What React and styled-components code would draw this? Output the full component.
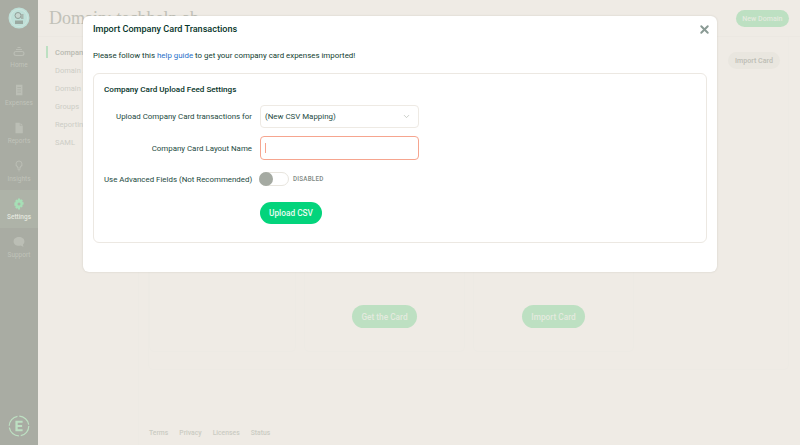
import React from "react";
import styled, { createGlobalStyle } from "styled-components";
import { ChevronDown, X } from "lucide-react";

const Global = createGlobalStyle`
  html, body { margin: 0; padding: 0; height: 100%; background: #efebe5; }
  * { box-sizing: border-box; }
  body { font-family: Roboto, "Liberation Sans", sans-serif; overflow: hidden; }
`;

const Page = styled.div`
  position: relative;
  width: 800px;
  height: 445px;
  display: flex;
  overflow: hidden;
  background: #efebe5;
`;

const Sidebar = styled.nav`
  width: 38px;
  flex: none;
  background: #a9aca3;
  display: flex;
  flex-direction: column;
  padding-top: 7px;
`;

const LogoSlot = styled.div`
  height: 31px;
  display: flex;
  justify-content: center;
  align-items: flex-start;
`;

const NavItem = styled.div`
  height: 38px;
  display: flex;
  flex-direction: column;
  align-items: center;
  justify-content: center;
  gap: 3px;
  padding-top: 1px;
  font-size: 6.5px;
  font-weight: ${p => (p.$active ? 500 : 400)};
  color: ${p => (p.$active ? "#e3e6de" : "#c0c3ba")};
  background: ${p => (p.$active ? "#aeb3a8" : "transparent")};
`;

const SidebarFoot = styled.div`
  margin-top: auto;
  height: 30px;
  display: flex;
  justify-content: center;
`;

const Main = styled.div`
  flex: 1;
  display: flex;
  flex-direction: column;
  min-width: 0;
`;

const Header = styled.header`
  height: 37px;
  flex: none;
  display: flex;
  align-items: center;
  justify-content: space-between;
  padding: 0 11px;
  border-bottom: 1px solid #ece8e2;
`;

const Title = styled.h1`
  margin: 0;
  font: 400 18px "Liberation Serif", serif;
  color: #c1c1b8;
`;

const GreenPill = styled.div`
  height: ${p => (p.$large ? "23px" : "17px")};
  padding: 0 ${p => (p.$large ? "9.5px" : "6.5px")};
  border-radius: 12px;
  background: #bde0c2;
  color: #e4eadf;
  font-size: ${p => (p.$large ? "8.3px" : "7.1px")};
  font-weight: 500;
  display: flex;
  align-items: center;
  white-space: nowrap;
`;

const Body = styled.div`
  flex: 1;
  display: flex;
  min-height: 0;
`;

const SubNav = styled.div`
  width: 101px;
  flex: none;
  border-right: 1px solid #edeae4;
  padding: 6px 0 0 8px;
  display: flex;
  flex-direction: column;
`;

const SubItem = styled.div`
  height: 18px;
  display: flex;
  align-items: center;
  padding-left: 9px;
  font-size: 7.5px;
  font-weight: ${p => (p.$active ? 500 : 400)};
  color: ${p => (p.$active ? "#b9bab1" : "#cdcdc5")};
  white-space: nowrap;
`;

const ActiveBar = styled.span`
  width: 2px;
  height: 12px;
  margin: 0 7px 0 -9px;
  background: #bde0c2;
`;

const Content = styled.div`
  flex: 1;
  min-width: 0;
  padding: 0 11px 0 10px;
  display: flex;
  flex-direction: column;
`;

const Panel = styled.section`
  height: 333px;
  flex: none;
  border: 1px solid #edeae4;
  border-top: none;
  border-radius: 0 0 5px 5px;
  padding: 15px 0 17px 0;
  display: flex;
  flex-direction: column;
  justify-content: space-between;
  margin-left: -1px;
`;

const PanelTop = styled.div`
  display: flex;
  justify-content: flex-end;
  padding-right: 8px;
`;

const GreyPill = styled.div`
  height: 17px;
  padding: 0 7px;
  border-radius: 9px;
  background: #e9e6df;
  color: #bdbdb5;
  font-size: 7.1px;
  font-weight: 500;
  display: flex;
  align-items: center;
`;

const Cards = styled.div`
  display: flex;
  gap: 8px;
`;

const Card = styled.div`
  width: ${p => p.$w}px;
  height: 120px;
  border: 1px solid #edeae4;
  border-top: none;
  border-radius: 0 0 5px 5px;
  display: flex;
  align-items: flex-end;
  justify-content: center;
  padding-bottom: 23px;
`;

const Footer = styled.footer`
  display: flex;
  gap: 11px;
  margin-top: auto;
  padding-bottom: 8px;
  font-size: 6.8px;
  font-weight: 500;
  color: #cbcbc3;
`;

const Modal = styled.div`
  position: absolute;
  left: 83px;
  top: 16px;
  width: 634px;
  height: 256px;
  background: #fff;
  border-radius: 6px;
  box-shadow: 0 0 2px rgba(120, 115, 100, 0.25);
  padding: 8px 10px 0;
  display: flex;
  flex-direction: column;
  color: #0b3a2e;
`;

const ModalHead = styled.div`
  display: flex;
  align-items: center;
  justify-content: space-between;
  height: 10px;
`;

const ModalTitle = styled.h2`
  margin: 0;
  font-size: 9.1px;
  font-weight: 500;
  color: #06352a;
`;

const Close = styled.div`
  color: #8a9a94;
  display: flex;
  margin-top: 1px;
  margin-right: -4px;
`;

const Intro = styled.p`
  margin: 16px 0 0;
  font-size: 7.9px;
  line-height: 11px;
  color: #10402f;
`;

const HelpLink = styled.a`
  color: #1f6fc9;
`;

const SettingsBox = styled.div`
  margin-top: 12px;
  height: 170px;
  border: 1px solid #ece8e2;
  border-radius: 6px;
  padding: 10px 10px 0;
`;

const SectionTitle = styled.h3`
  margin: 0;
  height: 11px;
  line-height: 11px;
  font-size: 8.1px;
  font-weight: 500;
  color: #06352a;
`;

const Form = styled.div`
  margin-top: 10px;
  display: grid;
  grid-template-columns: 148px 159px;
  column-gap: 8px;
  align-items: center;
`;

const Label = styled.div`
  text-align: right;
  font-size: 7.9px;
  color: #1c4a3e;
  white-space: nowrap;
`;

const Select = styled.div`
  height: 23px;
  border: 1px solid #eeeae4;
  border-radius: 4px;
  padding: 0 7px 0 4px;
  display: flex;
  align-items: center;
  justify-content: space-between;
  font-size: 7.9px;
  color: #1c4a3e;
`;

const ChevronWrap = styled.span`
  display: flex;
  color: #b9bdb6;
`;

const NameInput = styled.div`
  margin-top: 8px;
  height: 24px;
  border: 1px solid #f6a58f;
  border-radius: 4px;
  display: flex;
  align-items: center;
  padding-left: 4px;
`;

const Caret = styled.span`
  width: 1px;
  height: 10px;
  background: #f6a58f;
`;

const RowLabel = styled(Label)`
  margin-top: ${p => p.$mt}px;
`;

const ToggleRow = styled.div`
  margin-top: 12px;
  display: flex;
  align-items: center;
  gap: 4px;
  margin-left: -1px;
`;

const Toggle = styled.div`
  position: relative;
  width: 30px;
  height: 14px;
  border: 1px solid #e8e5de;
  border-radius: 7px;
`;

const Knob = styled.span`
  position: absolute;
  left: -1px;
  top: -1px;
  width: 14px;
  height: 14px;
  border-radius: 50%;
  background: #a5aaa2;
`;

const ToggleText = styled.span`
  font-size: 6.3px;
  font-weight: 500;
  letter-spacing: 0.2px;
  color: #7f8a84;
`;

const Upload = styled.button`
  grid-column: 2;
  justify-self: start;
  margin-top: 16px;
  width: 62px;
  height: 22px;
  padding: 0;
  border: 0;
  border-radius: 11px;
  background: #03d47c;
  color: #eafbf2;
  font-family: inherit;
  font-size: 8.3px;
  font-weight: 500;
`;

const Ico = ({ children, color = "#bbbeb5" }) => (
  <svg width="12" height="12" viewBox="0 0 12 12" fill={color} style={{ display: "block" }}>
    {children}
  </svg>
);

const navs = [
  ["Home", (
    <Ico>
      <path d="M4.500 1h3v1h-3zM3 3h6v1H3z" />
      <path d="M3 5h6a2.500 2.500 0 0 1 0 5H3a2.500 2.500 0 0 1 0-5zm0 1.100a1.400 1.400 0 0 0 0 2.800h6a1.400 1.400 0 0 0 0-2.800z" fillRule="evenodd" />
    </Ico>
  )],
  ["Expenses", (
    <Ico>
      <path fillRule="evenodd" d="M3 .8h6.400v10.400H3zM4.400 3v.8h3.600V3zM4.400 5.400v.8h3.600v-.8zM4.400 7.800v.8h3.600v-.8z" />
    </Ico>
  )],
  ["Reports", (
    <Ico>
      <path d="M2.500 .8h4.300v3h3v7.400H2.500zM7.500 .9l2.300 2.300H7.500z" />
    </Ico>
  )],
  ["Insights", (
    <Ico>
      <path fillRule="evenodd" d="M6 .6a3.500 3.500 0 0 1 1.800 6.500V8.600H4.200V7.100A3.500 3.500 0 0 1 6 .6zm0 1a2.500 2.500 0 0 0-1 4.800v1.200h2V6.400a2.500 2.500 0 0 0-1-4.800z" />
      <path d="M4.600 9.200h2.800v.8H4.600zM5.200 10.500h1.600v.7H5.200z" />
    </Ico>
  )],
  ["Settings", (
    <Ico color="#a6dfb6">
      <path fillRule="evenodd" d="M5 .6h2l.3 1.500 1.200-.8 1.400 1.400-.8 1.200 1.500.3v2.400l-1.500.3.8 1.200-1.400 1.400-1.200-.8L7 11.400H5l-.3-1.500-1.200.8-1.400-1.400.8-1.200-1.500-.3V4.400l1.500-.3-.8-1.200 1.400-1.400 1.200.8zM6 4.500a1.500 1.500 0 1 0 0 3 1.500 1.500 0 0 0 0-3z" />
    </Ico>
  )],
  ["Support", (
    <Ico>
      <path d="M6 1c3 0 5.400 1.800 5.400 4.400 0 1.300-.6 2.400-1.500 3.200l.6 2.400-2.800-1.400c-.5.1-1.100.2-1.700.2-3 0-5.400-1.800-5.400-4.400S3 1 6 1z" />
    </Ico>
  )],
];

const subs = ["Company Cards", "Domain Admins", "Domain Members", "Groups", "Reporting", "SAML"];

export default function App() {
  return (
    <Page>
      <Global />
      <Sidebar>
        <LogoSlot>
          <svg width="22" height="22" viewBox="0 0 22 22">
            <circle cx="11" cy="11" r="10.500" fill="#bfe0d8" />
            <circle cx="11" cy="11" r="8.500" fill="none" stroke="#cfe6df" strokeWidth="1" />
            <circle cx="10" cy="8.500" r="3" fill="#c6d6cf" stroke="#8f9f98" strokeWidth="1" />
            <path d="M7 13.500h8v3.500H7z" fill="#9aa9a1" />
            <path d="M13 7h2.500v5H13z" fill="#a7b6ae" />
          </svg>
        </LogoSlot>
        {navs.map(([name, icon]) => (
          <NavItem key={name} $active={name === "Settings"}>
            {icon}
            <span>{name}</span>
          </NavItem>
        ))}
        <SidebarFoot>
          <svg width="22" height="22" viewBox="0 0 22 22">
            <circle cx="11" cy="11" r="9.800" fill="none" stroke="#bde0c2" strokeWidth="1.200" strokeDasharray="13.500 1.900" />
            <path d="M7.400 5.800h7.200v2H9.700v2.200h4.400v2H9.700v2.200h4.900v2H7.400z" fill="#bde0c2" />
          </svg>
        </SidebarFoot>
      </Sidebar>
      <Main>
        <Header>
          <Title>Domain: techhelp.ab</Title>
          <GreenPill>New Domain</GreenPill>
        </Header>
        <Body>
          <SubNav>
            {subs.map((s, i) => (
              <SubItem key={s} $active={i === 0}>
                {i === 0 && <ActiveBar />}
                {s}
              </SubItem>
            ))}
          </SubNav>
          <Content>
            <Panel>
              <PanelTop>
                <GreyPill>Import Card</GreyPill>
              </PanelTop>
              <Cards>
                <Card $w={147} />
                <Card $w={161}><GreenPill $large>Get the Card</GreenPill></Card>
                <Card $w={161}><GreenPill $large>Import Card</GreenPill></Card>
              </Cards>
            </Panel>
            <Footer>
              <span>Terms</span>
              <span>Privacy</span>
              <span>Licenses</span>
              <span>Status</span>
            </Footer>
          </Content>
        </Body>
      </Main>
      <Modal>
        <ModalHead>
          <ModalTitle>Import Company Card Transactions</ModalTitle>
          <Close><X size={13} strokeWidth={3.600} /></Close>
        </ModalHead>
        <Intro>
          Please follow this <HelpLink>help guide</HelpLink> to get your company card expenses imported!
        </Intro>
        <SettingsBox>
          <SectionTitle>Company Card Upload Feed Settings</SectionTitle>
          <Form>
            <Label>Upload Company Card transactions for</Label>
            <Select>
              (New CSV Mapping)
              <ChevronWrap><ChevronDown size={9} /></ChevronWrap>
            </Select>
            <RowLabel $mt={8}>Company Card Layout Name</RowLabel>
            <NameInput><Caret /></NameInput>
            <RowLabel $mt={12}>Use Advanced Fields (Not Recommended)</RowLabel>
            <ToggleRow>
              <Toggle><Knob /></Toggle>
              <ToggleText>DISABLED</ToggleText>
            </ToggleRow>
            <Upload>Upload CSV</Upload>
          </Form>
        </SettingsBox>
      </Modal>
    </Page>
  );
}
